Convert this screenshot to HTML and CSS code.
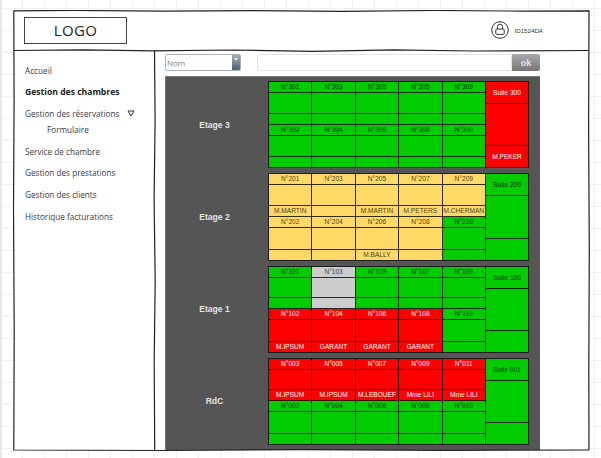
FILE: index.html
```html
<!DOCTYPE html>
<html lang="fr">

<head>
    <meta charset="UTF-8" />
    <title>Gestion des chambres</title>
    <link rel="stylesheet" href="styles.css">
</head>

<body>
    <div class="frame">
        <svg class="sketch" width="578" height="442" viewBox="0 0 578 442">
            <path d="M0.8 0.8 L60 0.4 L150 1.2 L240 0.6 L330 1.4 L420 0.5 L510 1.1 L576 0.8 L575.6 120 L576.3 240 L575.8 360 L576 440 L430 440.4 L290 439.6 L150 440.5 L0.8 440 L1.2 320 L0.5 200 L1.1 90 Z" />
            <path d="M0.8 40.5 L70 39.8 L140 40.9 L220 40 L300 41.3 L380 39.9 L460 41 L576 40.5" />
            <path d="M141.5 40.5 L142.1 110 L141.1 190 L142.2 270 L141.2 350 L141.7 440" />
        </svg>

        <header class="top">
            <div class="logo">LOGO</div>
            <div class="user">
                <svg width="18" height="18" viewBox="0 0 18 18" class="user-icon">
                    <circle cx="9" cy="9" r="8.3" />
                    <path d="M6.5 8 V5.6 a2.5 2.5 0 0 1 5 0 V8" />
                    <rect x="4.8" y="8" width="8.4" height="5.4" rx="1" />
                </svg>
                <span>ID1524DA</span>
            </div>
        </header>

        <div class="main">
            <nav class="menu">
                <a>Accueil</a>
                <a class="current">Gestion des chambres</a>
                <a class="has-sub">Gestion des réservations
                    <svg width="8" height="7" viewBox="0 0 8 7" class="arrow"><path d="M1 1 H7 L4 6 Z" /></svg>
                </a>
                <a class="sub">Formulaire</a>
                <a>Service de chambre</a>
                <a>Gestion des prestations</a>
                <a>Gestion des clients</a>
                <a>Historique facturations</a>
            </nav>

            <section class="content">
                <div class="search">
                    <div class="select">
                        <span>Nom</span>
                        <i class="select-btn"></i>
                    </div>
                    <div class="input"></div>
                    <button class="ok">ok</button>
                </div>

                <div class="plan">
                    <div class="floor">
                        <div class="floor-name">Etage 3</div>
                        <div class="rooms">
                            <div class="room green"><b>N°301</b><i></i><b></b></div>
                            <div class="room green"><b>N°303</b><i></i><b></b></div>
                            <div class="room green"><b>N°305</b><i></i><b></b></div>
                            <div class="room green"><b>N°305</b><i></i><b></b></div>
                            <div class="room green"><b>N°309</b><i></i><b></b></div>
                            <div class="room green"><b>N°302</b><i></i><b></b></div>
                            <div class="room green"><b>N°304</b><i></i><b></b></div>
                            <div class="room green"><b>N°306</b><i></i><b></b></div>
                            <div class="room green"><b>N°308</b><i></i><b></b></div>
                            <div class="room green"><b>N°310</b><i></i><b></b></div>
                        </div>
                        <div class="room suite red"><b>Suite 300</b><i></i><b>M.PEKER</b></div>
                    </div>

                    <div class="floor">
                        <div class="floor-name">Etage 2</div>
                        <div class="rooms">
                            <div class="room yellow"><b>N°201</b><i></i><b>M.MARTIN</b></div>
                            <div class="room yellow"><b>N°203</b><i></i><b></b></div>
                            <div class="room yellow"><b>N°205</b><i></i><b>M.MARTIN</b></div>
                            <div class="room yellow"><b>N°207</b><i></i><b>M.PETERS</b></div>
                            <div class="room yellow"><b>N°209</b><i></i><b>M.CHERMAN</b></div>
                            <div class="room yellow"><b>N°202</b><i></i><b></b></div>
                            <div class="room yellow"><b>N°204</b><i></i><b></b></div>
                            <div class="room yellow"><b>N°206</b><i></i><b>M.BALLY</b></div>
                            <div class="room yellow"><b>N°208</b><i></i><b></b></div>
                            <div class="room green"><b>N°210</b><i></i><b></b></div>
                        </div>
                        <div class="room suite green"><b>Suite 200</b><i></i><b></b></div>
                    </div>

                    <div class="floor">
                        <div class="floor-name">Etage 1</div>
                        <div class="rooms">
                            <div class="room green"><b>N°101</b><i></i><b></b></div>
                            <div class="room grey"><b>N°103</b><i></i><b></b></div>
                            <div class="room green"><b>N°105</b><i></i><b></b></div>
                            <div class="room green"><b>N°107</b><i></i><b></b></div>
                            <div class="room green"><b>N°109</b><i></i><b></b></div>
                            <div class="room red"><b>N°102</b><i></i><b>M.IPSUM</b></div>
                            <div class="room red"><b>N°104</b><i></i><b>GARANT</b></div>
                            <div class="room red"><b>N°106</b><i></i><b>GARANT</b></div>
                            <div class="room red"><b>N°108</b><i></i><b>GARANT</b></div>
                            <div class="room green"><b>N°110</b><i></i><b></b></div>
                        </div>
                        <div class="room suite green"><b>Suite 100</b><i></i><b></b></div>
                    </div>

                    <div class="floor">
                        <div class="floor-name">RdC</div>
                        <div class="rooms">
                            <div class="room red"><b>N°003</b><i></i><b>M.IPSUM</b></div>
                            <div class="room red"><b>N°005</b><i></i><b>M.IPSUM</b></div>
                            <div class="room red"><b>N°007</b><i></i><b>M.LEBOUEF</b></div>
                            <div class="room red"><b>N°009</b><i></i><b>Mme LILI</b></div>
                            <div class="room red"><b>N°011</b><i></i><b>Mme LILI</b></div>
                            <div class="room green"><b>N°002</b><i></i><b></b></div>
                            <div class="room green"><b>N°004</b><i></i><b></b></div>
                            <div class="room green"><b>N°006</b><i></i><b></b></div>
                            <div class="room green"><b>N°008</b><i></i><b></b></div>
                            <div class="room green"><b>N°010</b><i></i><b></b></div>
                        </div>
                        <div class="room suite green"><b>Suite 001</b><i></i><b></b></div>
                    </div>
                </div>
            </section>
        </div>
    </div>
</body>
</html>
```

FILE: styles.css
```css
html, body {
    height: 100%;
}

body {
    margin: 0;
    padding: 10px 0 0 11px;
    box-sizing: border-box;
    overflow: hidden;
    border-left: 2px solid #e8e8e8;
    font-family: "Open Sans", sans-serif;
    color: #333;
    background-color: #fff;
    background-image:
        linear-gradient(#f0f0f0 1px, transparent 1px),
        linear-gradient(90deg, #f0f0f0 1px, transparent 1px);
    background-size: 22px 22px;
    background-position: 0 8px;
}

.frame {
    position: relative;
    width: 576px;
    height: 440px;
    background: #fff;
    display: flex;
    flex-direction: column;
}

.sketch {
    position: absolute;
    top: 0;
    left: 0;
    pointer-events: none;
}

.sketch path {
    fill: none;
    stroke: #222;
    stroke-width: 1.2;
}

/* header */
.top {
    height: 40px;
    flex-shrink: 0;
    display: flex;
    align-items: center;
    justify-content: space-between;
    padding: 0 46px 0 11px;
}

.logo {
    width: 103px;
    height: 27px;
    box-sizing: border-box;
    border: 1px solid #444;
    text-align: center;
    font-size: 15px;
    line-height: 25px;
    letter-spacing: 0.4px;
    color: #222;
}

.user {
    display: flex;
    align-items: center;
    gap: 5px;
    font-family: "Liberation Sans", sans-serif;
    font-size: 6.2px;
    color: #333;
}

.user-icon circle, .user-icon path, .user-icon rect {
    fill: none;
    stroke: #333;
    stroke-width: 1;
}

/* left menu */
.main {
    flex: 1;
    display: flex;
    min-height: 0;
}

.menu {
    width: 142px;
    flex-shrink: 0;
    box-sizing: border-box;
    padding: 14.5px 0 0 12px;
    display: flex;
    flex-direction: column;
    font-size: 8.2px;
    color: #3a3a4a;
}

.menu a {
    height: 12px;
    line-height: 12px;
    margin-bottom: 9.7px;
    white-space: nowrap;
}

.menu .current {
    font-size: 8.6px;
    font-weight: bold;
    color: #222;
}

.menu .has-sub {
    margin-bottom: 4px;
}

.menu .sub {
    padding-left: 22px;
}

.arrow {
    margin-left: 5px;
}

.arrow path {
    fill: none;
    stroke: #333;
    stroke-width: 1;
}

/* search and plan */
.content {
    width: 375px;
    margin-left: 10px;
    display: flex;
    flex-direction: column;
}

.search {
    height: 17px;
    margin: 4px 0 5px;
    display: flex;
}

.select {
    width: 76px;
    box-sizing: border-box;
    border: 1px solid #a9b0b8;
    border-radius: 2px;
    display: flex;
    justify-content: space-between;
    font-size: 8px;
    line-height: 15px;
    color: #777;
    padding-left: 1px;
    overflow: hidden;
}

.select-btn {
    width: 8px;
    background: linear-gradient(#9fb0bd, #4e5f6c);
    position: relative;
}

.select-btn::after {
    content: "";
    position: absolute;
    left: 2px;
    top: 3px;
    border: 2px solid transparent;
    border-top: 3px solid #e8e8e8;
}

.input {
    width: 255px;
    margin-left: 16px;
    box-sizing: border-box;
    border: 1px solid #e1e5ea;
    border-radius: 3px 0 0 3px;
    background: #fff;
}

.ok {
    width: 28px;
    margin: 0;
    padding: 0;
    border: none;
    border-radius: 0 2px 2px 0;
    background: linear-gradient(#a9a9a9, #777);
    color: #e4e4e4;
    font-family: "Liberation Sans", sans-serif;
    font-size: 9px;
    font-weight: bold;
}

.plan {
    flex: 1;
    background: #555;
    padding: 4px 0 5px;
    display: flex;
    flex-direction: column;
    gap: 5px;
    border-left: 1px solid #777;
    border-top: 1px solid #777;
}

.floor {
    flex: 1;
    display: flex;
}

.floor-name {
    width: 102px;
    flex-shrink: 0;
    box-sizing: border-box;
    padding: 0 5px 0 0;
    display: flex;
    align-items: center;
    justify-content: center;
    font-family: "Liberation Sans", sans-serif;
    font-size: 8.6px;
    font-weight: bold;
    color: #e2e2e2;
}

.rooms {
    width: 218px;
    box-sizing: border-box;
    display: grid;
    grid-template-columns: repeat(5, 1fr);
    grid-template-rows: repeat(2, 1fr);
    border-left: 1px solid #1c1c1c;
    border-top: 1px solid #1c1c1c;
    border-bottom: 1px solid #1c1c1c;
}

/* one room: number, empty body, guest name */
.room {
    display: flex;
    flex-direction: column;
    min-width: 0;
    box-sizing: border-box;
    border-right: 1px solid rgba(0, 0, 0, 0.8);
    border-bottom: 1px solid rgba(0, 0, 0, 0.8);
    font-family: "Liberation Sans", sans-serif;
    font-size: 6.6px;
    text-align: center;
    white-space: nowrap;
}

.room:nth-child(n+6) {
    border-bottom: none;
}

.room b {
    height: 10px;
    line-height: 10px;
    font-weight: normal;
    flex-shrink: 0;
}

.room i {
    flex: 1;
    border-top: 1px solid rgba(0, 0, 0, 0.8);
    border-bottom: 1px solid rgba(0, 0, 0, 0.8);
}

.suite {
    width: 43px;
    border-top: 1px solid #1c1c1c;
    border-bottom: 1px solid #1c1c1c;
}

.suite b {
    height: 21px;
    line-height: 21px;
}

.green {
    background: #00cc00;
    color: #063306;
}

.red {
    background: #ff0000;
    color: #fff;
}

.yellow {
    background: #ffd966;
    color: #544416;
}

.grey {
    background: #ccc;
    color: #444;
}
```
